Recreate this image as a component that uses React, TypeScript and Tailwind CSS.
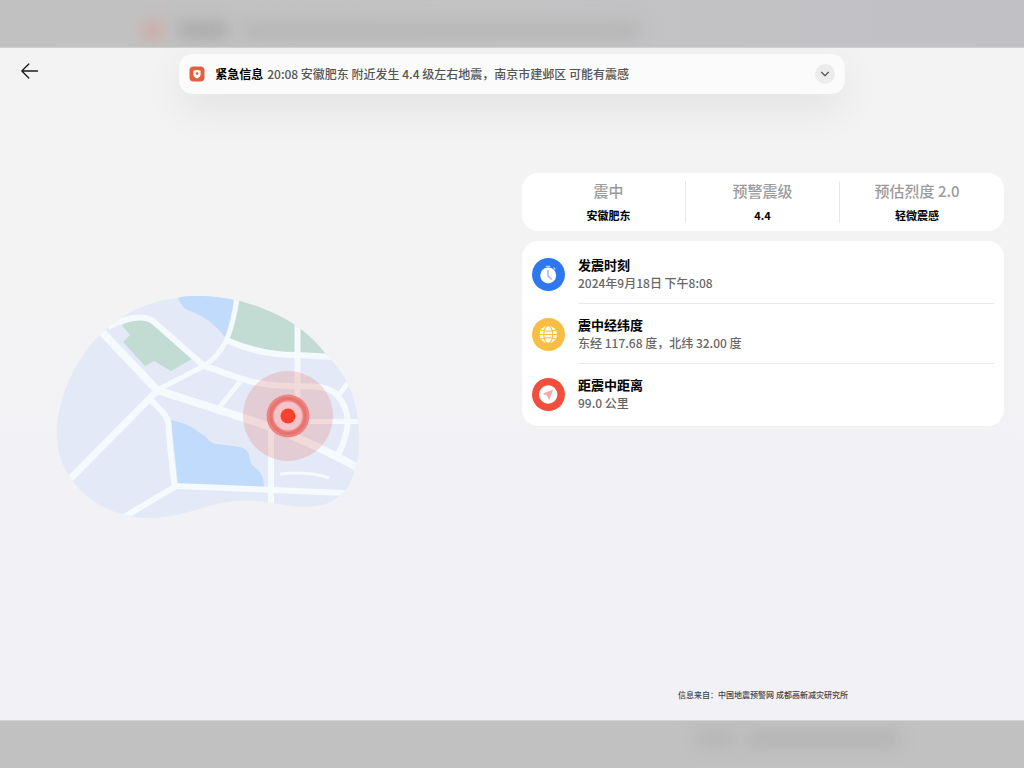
import React from 'react';
import { ChevronDown } from 'lucide-react';

interface Stat {
  label: string;
  value: string;
}

interface Detail {
  title: string;
  text: string;
  color: string;
  icon: React.ReactNode;
}

const TimerIcon = () => (
  <svg viewBox="0 0 34 34" className="w-full h-full" fill="none" aria-hidden="true">
    <rect x="14" y="8" width="5" height="1.6" rx=".8" fill="#b9d3fb" />
    <path d="M22.6 10.4l1 1" stroke="#b9d3fb" strokeWidth="1.4" strokeLinecap="round" />
    <circle cx="16.7" cy="18" r="8.2" fill="#fff" />
    <path d="M16.4 13v5.2l3.4 3.4" stroke="#8db8f8" strokeWidth="1.5" strokeLinecap="round" strokeLinejoin="round" />
  </svg>
);

const GlobeIcon = () => (
  <svg viewBox="0 0 34 34" className="w-full h-full" fill="none" aria-hidden="true">
    <circle cx="16.7" cy="17" r="9" fill="#fffaf0" />
    <g stroke="#f8bd42" strokeWidth="1.1">
      <ellipse cx="16.7" cy="17" rx="4.6" ry="9" />
      <path d="M7.5 17h18.4M9 12.4q7.7 2.6 15.4 0M9 21.6q7.7-2.6 15.4 0" />
    </g>
  </svg>
);

const CompassIcon = () => (
  <svg viewBox="0 0 34 34" className="w-full h-full" fill="none" aria-hidden="true">
    <circle cx="16.7" cy="17" r="9.5" fill="#fff" />
    <path d="M21 12.8l-9 3.4 4 1.6 1.6 4z" fill="#f3a9a9" stroke="#f3a9a9" strokeLinejoin="round" />
  </svg>
);

const stats: Stat[] = [
  { label: '震中', value: '安徽肥东' },
  { label: '预警震级', value: '4.4' },
  { label: '预估烈度 2.0', value: '轻微震感' },
];

const details: Detail[] = [
  { title: '发震时刻', text: '2024年9月18日 下午8:08', color: 'bg-[#2d78ee]', icon: <TimerIcon /> },
  { title: '震中经纬度', text: '东经 117.68 度\uff0c北纬 32.00 度', color: 'bg-[#f8bd42]', icon: <GlobeIcon /> },
  { title: '距震中距离', text: '99.0 公里', color: 'bg-[#ef4f3c]', icon: <CompassIcon /> },
];

const alertText = '20:08 安徽肥东 附近发生 4.4 级左右地震\uff0c南京市建邺区 可能有震感';
const sourceText = '信息来自\uff1a中国地震预警网 成都高新减灾研究所';

const QuakeMap = () => (
  <svg viewBox="56 294 306 226" className="w-[306px] max-w-full" fill="none" role="img" aria-label="震中地图">
    <defs>
      <clipPath id="land">
        <path d="M195 296C212 296 226 298 240 301C262 307 280 315 295 325C307 333 317 343 325 353C334 362 341 371 347 382C356 400 359 420 359 441C359 453 358 461 355 468C351 483 347 491 338 497C329 505 315 507 300 507C280 505 262 500 243 500.500C232 501 226 502 220 503C195 510 172 518 150 518C141 518 133 517 125 515C102 509 83 496 72 480C61 465 57 450 57.500 438C57 428 57 420 59 412C65 383 79 355 100 335C123 312 150 301 178 298C184 296 190 296 195 296Z" />
      </clipPath>
    </defs>
    <g clipPath="url(#land)">
      <path d="M50 290h320v235H50z" fill="#e3e9f6" />
      <path d="M176 290L178 298C181 305 184 309 190 311C202 315 213 322 225 337L232 322L236 290Z" fill="#c0dbfc" />
      <path d="M171 420C188 424 194 428 200 433C208 437 209 443 216 444L237 446.500C246 448 249 451 249.500 458C250 470 264 466 264 487L178 484Z" fill="#c0dbfc" />
      <path d="M122 325C132 319 147 317 154 323L192 359L171 371L154 361L145 366L123 342L130 335Z" fill="#c2dcd3" />
      <path d="M241 290L238 310L229 338Q260 351 296 353L330 354V290Z" fill="#c2dcd3" />
      <g stroke="#f4fafe" strokeWidth="6" strokeLinejoin="round">
        <path d="M68 481L157 391" strokeWidth="7" />
        <path d="M157 390L204 366C225 352 232 333 237 297" strokeWidth="5" />
        <path d="M99 329L157 390L216 409L265 425C290 434 320 447 360 469" strokeWidth="8" />
        <path d="M108 327C125 318 143 314 153 321L204 366C224 371 245 385 287 386C308 387 328 384 337 395C351 411 351 429 338 455" />
        <path d="M226 340C250 351 275 355 297 355L335 357" />
        <path d="M297.500 318V398" />
        <path d="M240 382L218 409" strokeWidth="5" />
        <path d="M308 421.500H362" strokeWidth="5" />
        <path d="M348 383L338 396" strokeWidth="5" />
        <path d="M271 428V508" />
        <path d="M151 400C160 410 167 414 168.500 424C169 445 173 468 174.500 487L124 517" />
        <path d="M175 486L345 493" />
        <path d="M281 474C298 472 312 473 328 477.500" strokeWidth="3" strokeLinecap="round" />
      </g>
    </g>
    <circle cx="288" cy="416" r="45" fill="#e84a3c" fillOpacity=".18" />
    <circle cx="288" cy="416" r="21.500" fill="#ee8481" />
    <circle cx="288" cy="416" r="17.500" stroke="#e77371" strokeWidth="3" />
    <circle cx="288" cy="416" r="14.500" fill="#f3c3c8" />
    <circle cx="288" cy="416" r="7.500" fill="#fa412b" />
  </svg>
);

export default function App() {
  return (
    <div className="min-h-screen flex flex-col font-['Noto_Sans_CJK_SC',sans-serif] text-black">
      {/* Blurred backdrop above the window */}
      <div className="h-12 shrink-0 overflow-hidden bg-linear-to-r from-[#c1c1c1] via-[#c3c3c4] to-[#c1c0c5] border-b border-[#d0d0d0] pt-5" aria-hidden="true">
        <div className="flex items-center w-full pl-[14%]">
          <div className="w-5 h-5 rounded-full bg-[#d0a69c] blur-sm" />
          <div className="w-12 h-4 ml-4 bg-[#a8a8a8] blur-sm" />
          <div className="w-[45%] h-4 ml-4 bg-[#b5b5b5] blur-sm" />
        </div>
      </div>

      <main className="flex-1 flex flex-col overflow-hidden bg-linear-to-b from-[#f3f3f3] from-30% to-[#f2f1f6] to-70%">
        <header className="grid grid-cols-[1fr_65%_1fr] pt-[6px]">
          <button type="button" aria-label="返回" className="ml-5 mt-[7px] w-5 h-5 self-start">
            <svg viewBox="0 0 20 20" className="w-5 h-5" fill="none" stroke="#1c1c1c" strokeWidth="1.3" strokeLinecap="round" strokeLinejoin="round">
              <path d="M17.500 10H1.800M8.800 3L1.800 10l7 7" />
            </svg>
          </button>
          <div className="h-10 flex items-center px-[10px] rounded-[14px] bg-[#fbfbfb] shadow-[0_14px_40px_rgba(0,0,0,0.08)]">
            <svg viewBox="0 0 16 16" className="w-4 h-4 shrink-0" aria-hidden="true">
              <rect x=".5" y=".5" width="15" height="15" rx="4" fill="#e3603f" />
              <path d="M8 3.800l3.600 1v3.400c0 2.200-1.700 3.500-3.600 4.300-1.900-.8-3.600-2.100-3.600-4.300V4.800z" fill="#fff" />
              <circle cx="8" cy="7.600" r="1.300" fill="#e3603f" />
            </svg>
            <strong className="ml-[10px] text-xs font-bold">紧急信息</strong>
            <p className="ml-1 flex-1 text-xs font-medium text-[#555]">{alertText}</p>
            <button type="button" aria-label="展开" className="w-5 h-5 rounded-full bg-[#ececec] flex items-center justify-center text-[#555]">
              <ChevronDown className="w-[14px] h-[14px]" strokeWidth={2} />
            </button>
          </div>
        </header>

        <div className="flex-1 grid grid-cols-2 pt-[79px]">
          <div className="pl-14 pt-[121px]">
            <QuakeMap />
          </div>

          <div className="flex flex-col pl-[10px] pr-5 pb-[17px]">
            <dl className="grid grid-cols-3 px-[10px] py-2 rounded-2xl bg-white divide-x divide-[#e8e8e8]">
              {stats.map((stat) => (
                <div key={stat.label} className="h-[42px] text-center">
                  <dt className="text-[15px] leading-5 font-medium text-[#9b9b9b]">{stat.label}</dt>
                  <dd className="mt-[6px] text-[11px] leading-4 font-bold">{stat.value}</dd>
                </div>
              ))}
            </dl>

            <ul className="mt-[10px] px-[10px] pt-[3px] pb-[2px] rounded-2xl bg-white">
              {details.map((item, i) => (
                <li key={item.title} className="flex items-center">
                  <span className={`w-[33px] h-[33px] shrink-0 rounded-full ${item.color}`}>{item.icon}</span>
                  <div className={`ml-[13px] flex-1 h-[60px] flex flex-col justify-center ${i < details.length - 1 ? 'border-b border-[#e9e9eb]' : ''}`}>
                    <h2 className="text-[13px] leading-[18px] font-bold">{item.title}</h2>
                    <p className="text-xs leading-[18px] font-medium text-[#666]">{item.text}</p>
                  </div>
                </li>
              ))}
            </ul>

            <p className="mt-auto text-center text-[8px] leading-4 font-medium text-[#444]">{sourceText}</p>
          </div>
        </div>
      </main>

      {/* Blurred backdrop below the window */}
      <div className="h-12 shrink-0 overflow-hidden bg-[#c1c1c1] border-t border-[#d4d4d4] pt-[10px]" aria-hidden="true">
        <div className="flex pl-[68%]">
          <div className="w-10 h-4 bg-[#b5b5b5] blur-sm" />
          <div className="w-[46%] h-4 ml-3 bg-[#b3b3b3] blur-sm" />
        </div>
      </div>
    </div>
  );
}
